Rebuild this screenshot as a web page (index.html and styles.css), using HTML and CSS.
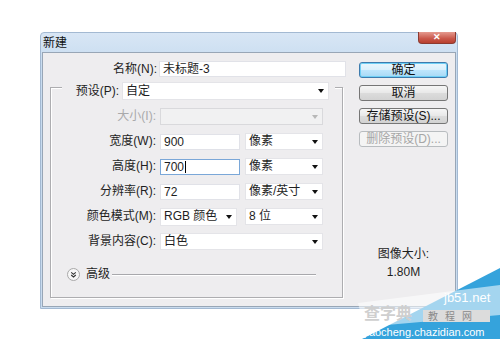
FILE: index.html
```html
<!DOCTYPE html>
<html lang="zh-CN">
<head>
<meta charset="utf-8">
<title>新建</title>
<link rel="stylesheet" href="styles.css">
</head>
<body>
<div class="stage">
  <div class="window">
    <div class="titlebar">
      <span class="title">新建</span>
      <span class="close">&#x2715;</span>
    </div>
    <div class="client">
      <div class="main">
        <div class="namerow">
          <label class="nlabel">名称(N):</label>
          <div class="input name">未标题-3</div>
        </div>
        <div class="group">
          <div class="preset">
            <label class="plabel">预设(P):</label>
            <div class="select preset-sel"><span>自定</span><i class="arrow"></i></div>
          </div>
          <div class="row">
            <label class="label disabled">大小(I):</label>
            <div class="select wide off"><span></span><i class="arrow"></i></div>
          </div>
          <div class="row">
            <label class="label">宽度(W):</label>
            <div class="input num">900</div>
            <div class="select unit"><span>像素</span><i class="arrow"></i></div>
          </div>
          <div class="row">
            <label class="label">高度(H):</label>
            <div class="input num focus">700<b class="caret"></b></div>
            <div class="select unit"><span>像素</span><i class="arrow"></i></div>
          </div>
          <div class="row">
            <label class="label">分辨率(R):</label>
            <div class="input num">72</div>
            <div class="select unit"><span>像素/英寸</span><i class="arrow"></i></div>
          </div>
          <div class="row">
            <label class="label">颜色模式(M):</label>
            <div class="select mode"><span>RGB 颜色</span><i class="arrow"></i></div>
            <div class="select unit"><span>8 位</span><i class="arrow"></i></div>
          </div>
          <div class="row">
            <label class="label">背景内容(C):</label>
            <div class="select wide"><span>白色</span><i class="arrow"></i></div>
          </div>
          <div class="adv">
            <span class="chev">
              <svg width="13" height="13" viewBox="0 0 13 13"><circle cx="6.5" cy="6.5" r="6" fill="#f7f7f7" stroke="#a8a8a8"/><path d="M4.2 4.3l2.3 2 2.3-2M4.2 7l2.3 2 2.3-2" fill="none" stroke="#333" stroke-width="1.1"/></svg>
            </span>
            <span class="advtext">高级</span>
            <span class="advline"></span>
          </div>
        </div>
      </div>
      <div class="side">
        <button class="btn default">确定</button>
        <button class="btn">取消</button>
        <button class="btn">存储预设(S)...</button>
        <button class="btn disabled">删除预设(D)...</button>
        <div class="imgsize">
          <div>图像大小:</div>
          <div>1.80M</div>
        </div>
      </div>
    </div>
  </div>
</div>
<svg class="watermark" width="160" height="72" viewBox="0 0 160 72">
  <polygon points="160,1 160,72 22,72" fill="#35a3dc"/>
  <polygon points="18,36 160,18 160,48 24,60" fill="#ffffff" opacity="0.55"/>
  <text x="24" y="52" font-family="Noto Sans CJK SC, sans-serif" font-size="16" font-weight="700" fill="#cfcfcf">查字典</text>
  <rect x="83" y="43" width="67" height="12" fill="#dcdcdc"/>
  <text x="88" y="53" font-family="Noto Sans CJK SC, sans-serif" font-size="10" fill="#8a8a8a" letter-spacing="7">教程网</text>
  <text x="104" y="35" font-family="Liberation Sans, sans-serif" font-size="13" fill="#ffffff">jb51.net</text>
  <text x="24" y="69" font-family="Liberation Sans, sans-serif" font-size="11" fill="#ffffff">jiaocheng.chazidian.com</text>
</svg>
</body>
</html>
```
FILE: styles.css
```css
html, body {
  margin: 0;
  padding: 0;
}
body {
  width: 500px;
  height: 339px;
  background: #ffffff;
  position: relative;
  overflow: hidden;
  font-family: "Liberation Sans", "Noto Sans CJK SC", sans-serif;
  font-size: 12px;
  color: #1e1e1e;
}
.stage {
  padding: 32px 0 0 40px;
}
.window {
  box-sizing: border-box;
  width: 418px;
  height: 277px;
  border: 1px solid #a3b9d2;
  border-radius: 4px 4px 0 0;
  background: linear-gradient(#d8e6f5, #c8dcf0 30px, #cadcef);
  padding: 0 1px 1px 1px;
  display: flex;
  flex-direction: column;
}
.titlebar {
  height: 19px;
  display: flex;
  align-items: flex-start;
}
.title {
  padding: 3px 0 0 1px;
  line-height: 14px;
  color: #111;
}
.close {
  margin-left: auto;
  margin-top: -1px;
  width: 38px;
  height: 12px;
  box-sizing: border-box;
  border: 1px solid #8c3a30;
  border-top: none;
  border-radius: 0 0 4px 4px;
  background: linear-gradient(#e59a8f, #c9574a 60%, #b8402f);
  color: #fff;
  font-size: 9px;
  font-weight: 700;
  line-height: 11px;
  text-align: center;
}
.client {
  box-sizing: border-box;
  height: 255px;
  border: 1px solid #98a6b6;
  background: #eeedef;
  display: flex;
  padding-top: 8px;
}
.main {
  width: 303px;
}
.namerow {
  display: flex;
  align-items: center;
  height: 16px;
}
.nlabel {
  width: 114px;
  text-align: right;
  margin-right: 2px;
  line-height: 16px;
}
.input {
  box-sizing: border-box;
  height: 16px;
  background: #fff;
  border: 1px solid #e1e2e8;
  padding-left: 3px;
  line-height: 14px;
  font-size: 12px;
}
.name {
  width: 187px;
}
.group {
  box-sizing: border-box;
  margin: 10px 0 0 7px;
  width: 293px;
  height: 211px;
  border: 1px solid #adadb0;
  box-shadow: inset 1px 1px 0 #ffffff, 1px 1px 0 #ffffff;
  display: flex;
  flex-direction: column;
}
.preset {
  margin: -6px 0 0 11px;
  width: 273px;
  box-sizing: border-box;
  padding: 0 6px 0 12px;
  background: #eeedef;
  display: flex;
  align-items: center;
  height: 18px;
}
.plabel {
  width: 45px;
  margin-right: 3px;
  text-align: right;
  white-space: nowrap;
  line-height: 18px;
}
.select {
  box-sizing: border-box;
  height: 17px;
  background: #fff;
  border: 1px solid #e4e4e8;
  display: flex;
  align-items: center;
  justify-content: space-between;
  padding: 0 4px 0 3px;
  line-height: 15px;
}
.preset-sel {
  width: 207px;
  height: 18px;
}
.arrow {
  width: 0;
  height: 0;
  border-left: 3.5px solid transparent;
  border-right: 3.5px solid transparent;
  border-top: 4px solid #111;
}
.row {
  display: flex;
  align-items: center;
  margin-top: 8px;
  height: 17px;
}
.label {
  width: 105px;
  margin-right: 4px;
  text-align: right;
  white-space: nowrap;
  line-height: 17px;
}
.label.disabled {
  color: #a9a9ab;
}
.wide {
  width: 163px;
}
.off {
  background: #f1f1f2;
  border-color: #d9d9dc;
}
.off .arrow {
  border-top-color: #b8b8b8;
}
.num {
  width: 80px;
  height: 16px;
  margin-right: 5px;
}
.focus {
  border-color: #7aa7d8;
  display: flex;
  align-items: center;
}
.caret {
  display: inline-block;
  width: 1px;
  height: 12px;
  background: #000;
  margin-left: 1px;
}
.unit {
  width: 78px;
}
.mode {
  width: 77px;
  height: 18px;
  margin-right: 8px;
}
.adv {
  display: flex;
  align-items: center;
  margin: 18px 0 0 16px;
  height: 13px;
}
.chev {
  width: 13px;
  height: 13px;
  display: block;
}
.chev svg {
  display: block;
}
.advtext {
  margin-left: 6px;
  line-height: 13px;
}
.advline {
  flex: 1;
  height: 0;
  border-top: 1px solid #a8a8ac;
  border-bottom: 1px solid #ffffff;
  margin: 0 26px 0 2px;
}
.side {
  margin-left: 13px;
  width: 89px;
  padding-top: 1px;
  display: flex;
  flex-direction: column;
}
.btn {
  box-sizing: border-box;
  width: 89px;
  height: 16px;
  margin: 0 0 7px 0;
  padding: 0;
  border: 1px solid #767676;
  border-radius: 3px;
  background: linear-gradient(#f6f6f6, #e8e8e8 50%, #dcdcdc 51%, #d2d2d2);
  font-family: "Liberation Sans", "Noto Sans CJK SC", sans-serif;
  font-size: 12px;
  line-height: 14px;
  color: #111;
  text-align: center;
}
.btn.default {
  border-color: #3d7bad;
  box-shadow: inset 0 0 0 1px #6fd0f6;
  background: linear-gradient(#eaf6fd, #d9f0fc 50%, #bee6fd 51%, #a7d9f5);
}
.btn.disabled {
  border-color: #b8bcbf;
  background: #f4f4f4;
  color: #a6a6a6;
}
.imgsize {
  margin-top: 91px;
  text-align: center;
  line-height: 18px;
}
.watermark {
  position: absolute;
  right: 0;
  bottom: 0;
  display: block;
}
```
